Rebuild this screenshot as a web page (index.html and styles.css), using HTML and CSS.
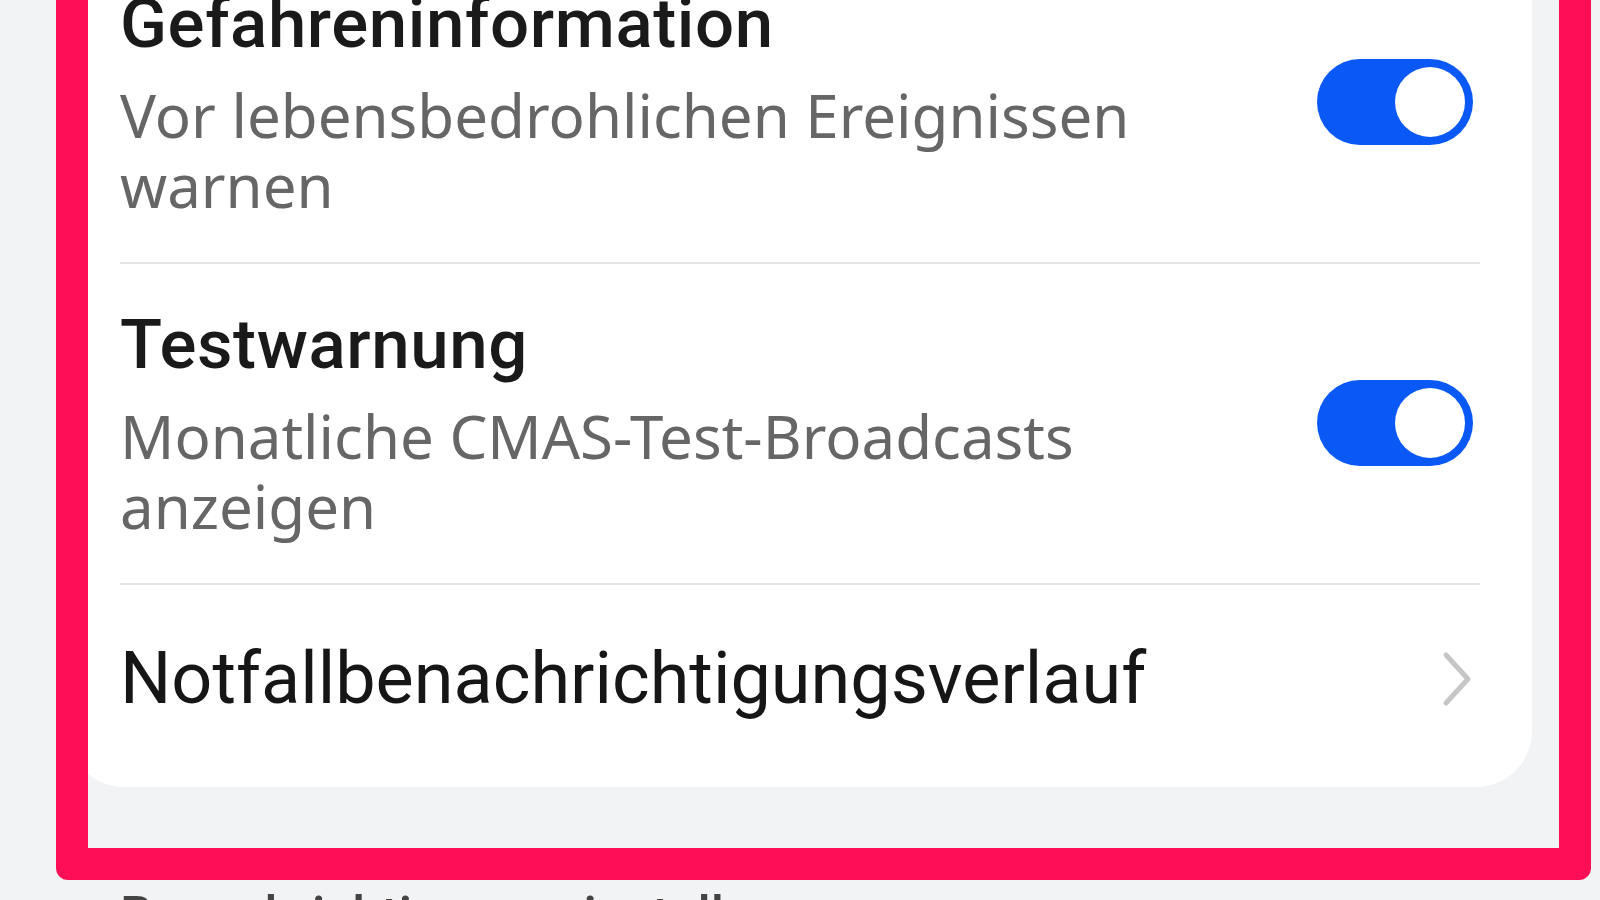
FILE: index.html
```html
<!DOCTYPE html>
<html lang="de">
<head>
<meta charset="utf-8">
<title>Notfallbenachrichtigungen</title>
<link rel="stylesheet" href="styles.css">
</head>
<body>
<main class="screen">
  <section class="card">
    <div class="row">
      <div class="text">
        <div class="title">Gefahreninformation</div>
        <div class="subtitle">Vor lebensbedrohlichen Ereignissen warnen</div>
      </div>
      <div class="toggle on"><span class="knob"></span></div>
    </div>
    <div class="row">
      <div class="text">
        <div class="title">Testwarnung</div>
        <div class="subtitle">Monatliche CMAS-Test-Broadcasts anzeigen</div>
      </div>
      <div class="toggle on"><span class="knob"></span></div>
    </div>
    <div class="row row-link">
      <div class="text">
        <div class="title title-link">Notfallbenachrichtigungsverlauf</div>
      </div>
      <svg class="chevron" viewBox="0 0 30 56" width="30" height="56" aria-hidden="true">
        <path d="M4 4 L26 28 L4 52" fill="none" stroke="#c6c6c6" stroke-width="5" stroke-linecap="round" stroke-linejoin="round"/>
      </svg>
    </div>
  </section>
  <h2 class="section-title">Benachrichtigungseinstellungen</h2>
  <div class="highlight"></div>
</main>
</body>
</html>
```

FILE: styles.css
```css
html, body {
  margin: 0;
  padding: 0;
}

body {
  width: 1600px;
  height: 900px;
  overflow: hidden;
  background: #f1f3f5;
  font-family: Roboto, "Noto Sans", sans-serif;
}

.screen {
  position: relative;
  display: flow-root;
  width: 1600px;
  height: 900px;
}

.card {
  margin: -57px 68px 0 68px;
  padding: 0 52px 14px;
  background: #ffffff;
  border-radius: 56px;
}

.row {
  display: flex;
  align-items: center;
  justify-content: space-between;
  padding: 41px 0 42px;
  border-bottom: 2px solid #e4e4e4;
}

.row-link {
  padding: 51px 0;
  border-bottom: none;
}

.text {
  display: flex;
  flex-direction: column;
  max-width: 1050px;
}

.title {
  font-family: Roboto, sans-serif;
  font-weight: 500;
  font-size: 69px;
  line-height: 80px;
  letter-spacing: 0.6px;
  color: #1a1a1a;
  white-space: nowrap;
}

.title-link {
  font-weight: 400;
  font-size: 72px;
  line-height: 86px;
  letter-spacing: 0;
  color: #161616;
}

.subtitle {
  margin-top: 16px;
  font-family: "Noto Sans", sans-serif;
  font-weight: 400;
  font-size: 60px;
  line-height: 70px;
  color: #666666;
}

.toggle {
  display: flex;
  align-items: center;
  justify-content: flex-end;
  box-sizing: border-box;
  width: 156px;
  height: 86px;
  padding: 0 8px;
  margin-right: 7px;
  border-radius: 43px;
  background: #0a59f7;
  flex-shrink: 0;
}

.knob {
  display: block;
  width: 70px;
  height: 70px;
  border-radius: 50%;
  background: #ffffff;
}

.chevron {
  display: block;
  margin-right: 8px;
  flex-shrink: 0;
}

.section-title {
  margin: 99px 0 0 120px;
  font-family: Roboto, sans-serif;
  font-weight: 500;
  font-size: 52px;
  line-height: 60px;
  color: #444444;
  white-space: nowrap;
}

.highlight {
  position: absolute;
  left: 56px;
  right: 9px;
  top: -60px;
  bottom: 20px;
  border: 32px solid #fe0f55;
  border-radius: 12px;
  pointer-events: none;
}
```
